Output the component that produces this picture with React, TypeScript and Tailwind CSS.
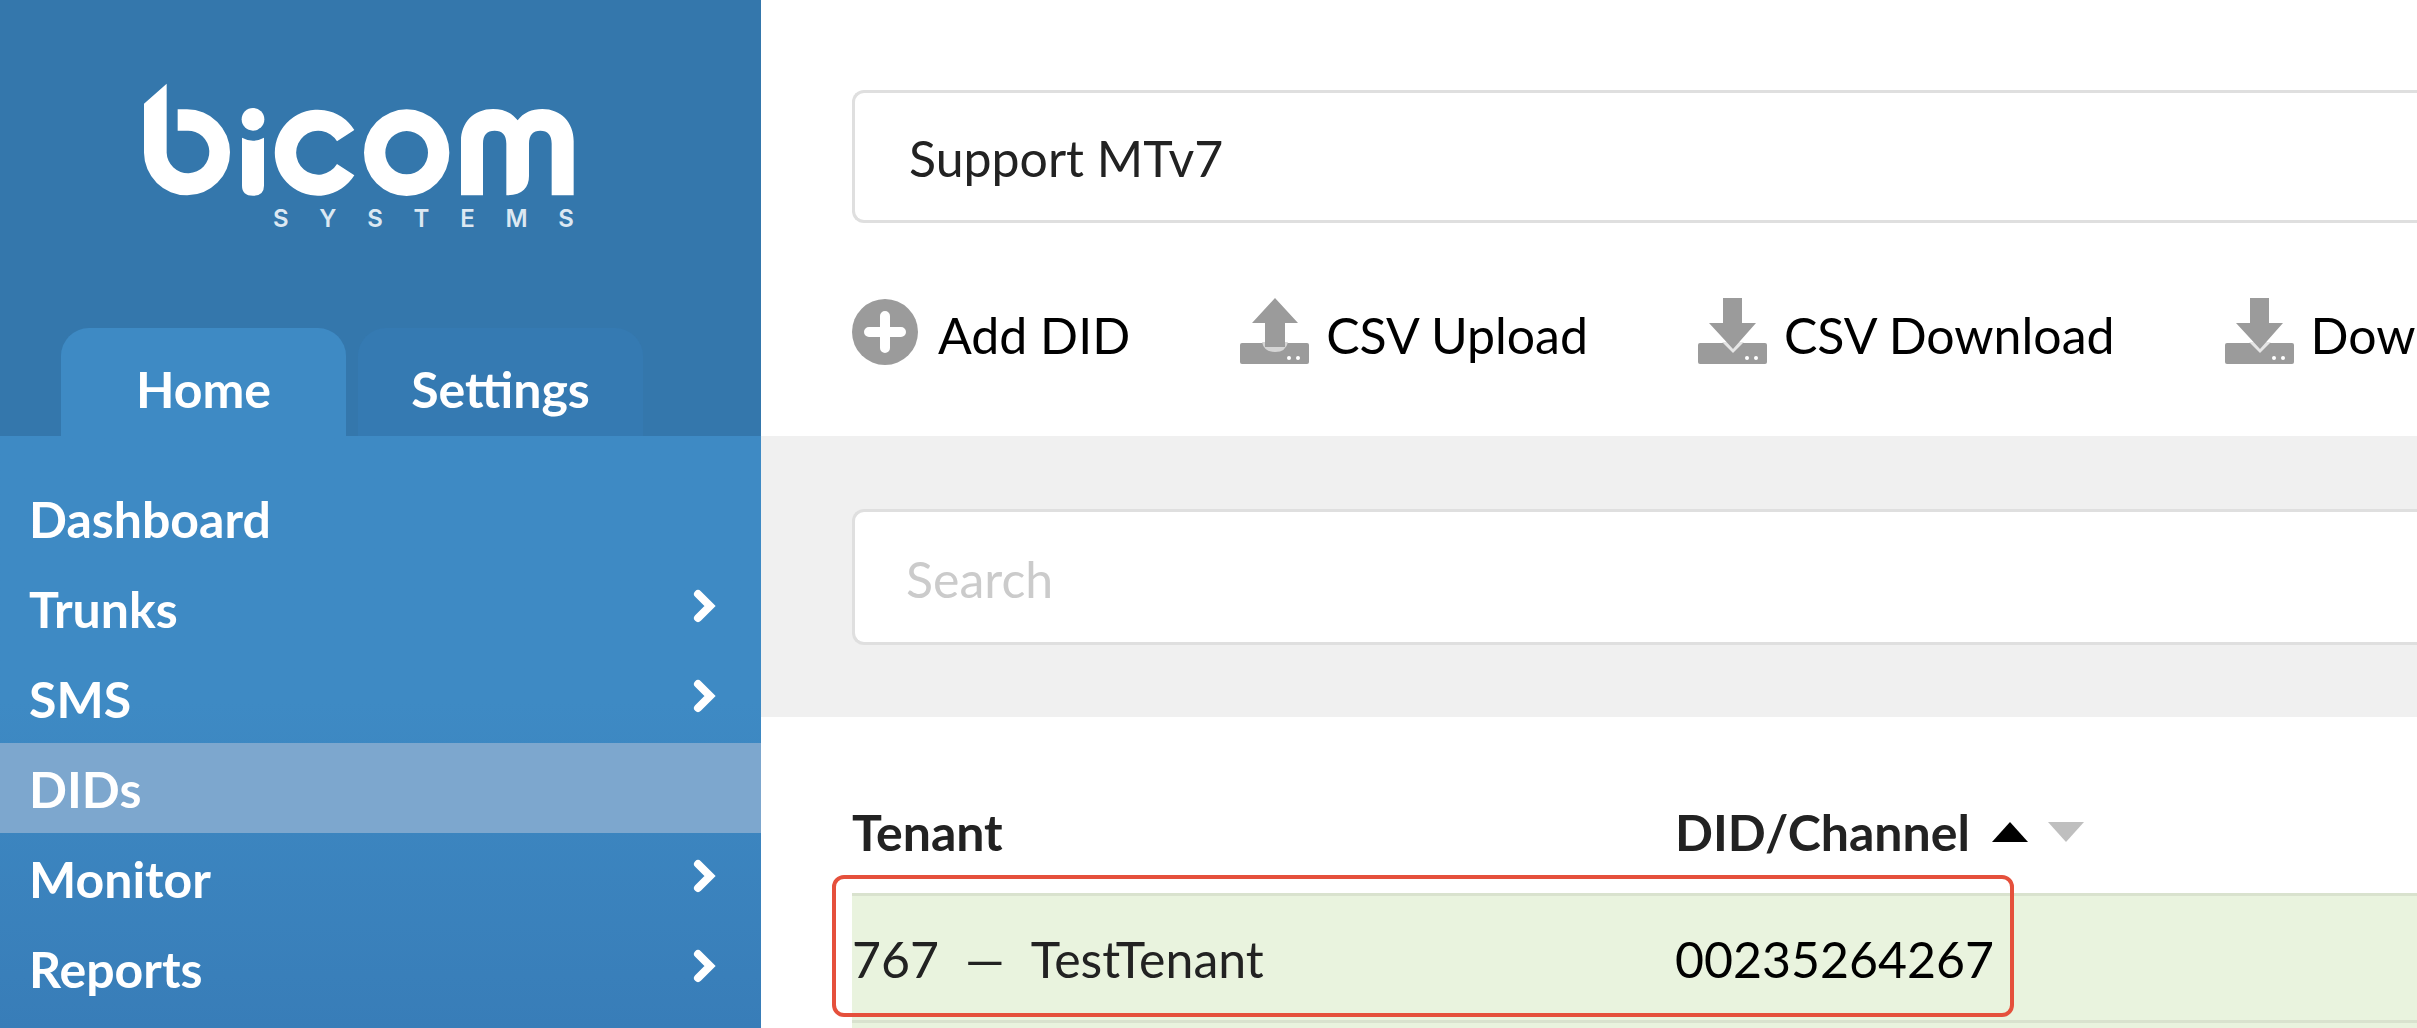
const menuItems = [
    { label: "Dashboard", hasChildren: false, active: false },
    { label: "Trunks", hasChildren: true, active: false },
    { label: "SMS", hasChildren: true, active: false },
    { label: "DIDs", hasChildren: false, active: true },
    { label: "Monitor", hasChildren: true, active: false },
    { label: "Reports", hasChildren: true, active: false },
];

const Logo = () => (
    <div className="w-[430px]">
        <svg viewBox="71 66 1290 339" className="block w-full" fill="#fff" role="img" aria-label="bicom">
            <path d="M172 145H200A129 129 0 1 1 71 275V128L139 68V275A64 64 0 1 0 200 209H172Z" />
            <circle cx="398" cy="175" r="34" />
            <path d="M365 230Q398 248 431 230V374Q431 404 398 404Q365 404 365 374Z" />
            <path d="M702 207A129 129 0 1 0 702 343L650 309A66 66 0 1 1 650 241Z" />
            <path
                fillRule="evenodd"
                d="M859 145A128 130 0 1 0 859 405A128 130 0 1 0 859 145ZM859 210A64 65 0 1 1 859 340A64 65 0 1 1 859 210Z"
            />
            <path d="M1022 403V240C1022 185 1060 144 1118 144C1150 144 1175 155 1192 178C1209 155 1234 144 1266 144C1322 144 1360 185 1360 240V403H1294V248C1294 222 1282 209 1260 209C1238 209 1226 222 1226 248V345C1226 380 1205 403 1158 403V248C1158 222 1146 209 1123 209C1100 209 1088 222 1088 248V403Z" />
        </svg>
        <div className="mt-[9px] ml-auto flex w-[301px] justify-between font-[Inter,sans-serif] text-2xl leading-7 font-semibold text-[#dce8f2]">
            {"SYSTEMS".split("").map((letter, i) => (
                <span key={i}>{letter}</span>
            ))}
        </div>
    </div>
);

const Chevron = () => (
    <svg viewBox="0 0 24 34" className="mb-1 h-[34px] w-6" aria-hidden="true">
        <path d="M5 5L17 17L5 29" fill="none" stroke="#fff" strokeWidth="8" strokeLinecap="round" />
    </svg>
);

const PlusIcon = () => (
    <svg viewBox="0 0 70 68" className="h-17 w-[70px]" aria-hidden="true">
        <circle cx="33" cy="34" r="33" fill="#9b9b9b" />
        <path d="M33 18V50M17 34H49" stroke="#fff" strokeWidth="10" strokeLinecap="round" />
    </svg>
);

const Tray = () => (
    <>
        <rect x="0" y="45" width="69" height="21" rx="2" fill="#9b9b9b" />
        <circle cx="49" cy="60" r="2" fill="#fff" />
        <circle cx="58" cy="60" r="2" fill="#fff" />
    </>
);

const UploadIcon = () => (
    <svg viewBox="0 0 70 68" className="h-17 w-[70px]" aria-hidden="true">
        <Tray />
        <path d="M22 44H48Q46 54 35 54Q24 54 22 44Z" fill="#d5d5d5" />
        <path d="M35 0L58 25H45V49H25V25H12Z" fill="#9b9b9b" />
    </svg>
);

const DownloadIcon = () => (
    <svg viewBox="0 0 70 68" className="h-17 w-[70px]" aria-hidden="true">
        <Tray />
        <path d="M24 44H46L35 55Z" fill="#e6e6e6" />
        <path d="M25 0H44V25H58L35 51L11 25H25Z" fill="#9b9b9b" />
    </svg>
);

const actions = [
    { label: "Add DID", icon: <PlusIcon /> },
    { label: "CSV Upload", icon: <UploadIcon /> },
    { label: "CSV Download", icon: <DownloadIcon /> },
    { label: "Dow", icon: <DownloadIcon /> },
];

const Sidebar = () => (
    <aside className="flex w-[761px] shrink-0 flex-col font-bold text-white">
        <div className="flex flex-col bg-[#3477ac]">
            <div className="pt-[83px] pl-36">
                <Logo />
            </div>
            <div className="mt-[95px] flex gap-3 pl-[61px]" role="tablist">
                <button role="tab" aria-selected="true" className="h-[108px] w-[285px] rounded-t-[28px] bg-[#3e8ac4] pt-3.5">
                    Home
                </button>
                <button role="tab" aria-selected="false" className="h-[108px] w-[285px] rounded-t-[28px] bg-[#357ab2] pt-3.5">
                    Settings
                </button>
            </div>
        </div>
        <nav className="flex-1 bg-linear-to-b from-[#3e8ac4] from-45% to-[#387db8] pt-[37px]">
            {menuItems.map(({ label, hasChildren, active }) => (
                <a
                    key={label}
                    href="#"
                    aria-current={active ? "page" : undefined}
                    className={`flex h-[90px] items-center justify-between pr-11 pl-[29px] ${active ? "bg-[#7da7ce]" : ""}`}
                >
                    <span className="pt-0.5">{label}</span>
                    {hasChildren && <Chevron />}
                </a>
            ))}
        </nav>
    </aside>
);

const DidTable = () => (
    <table className="w-full table-fixed border-collapse text-left">
        <thead>
            <tr className="h-[127px] font-bold text-[#222]">
                <th className="w-[823px] pt-1">Tenant</th>
                <th className="pt-1">
                    <button className="flex items-center">
                        DID/Channel
                        <svg viewBox="0 0 92 20" className="ml-[22px] h-5 w-[92px]" aria-hidden="true">
                            <path d="M0 20L18 0L36 20Z" />
                            <path d="M56 0H92L74 20Z" fill="#bfbfbf" />
                        </svg>
                    </button>
                </th>
            </tr>
        </thead>
        <tbody>
            <tr className="h-[127px] border-t-3 border-[#d9e2ce] bg-[#e9f3de]">
                <td className="pt-0.5 text-[#222]">
                    <span className="flex gap-[26px]">
                        <span>767</span>
                        <span>—</span>
                        <span>TestTenant</span>
                    </span>
                </td>
                <td className="pt-0.5">00235264267</td>
            </tr>
            <tr className="h-[127px] border-t-3 border-[#d9e2ce] bg-[#e9f3de]">
                <td />
                <td />
            </tr>
        </tbody>
    </table>
);

const App = () => (
    <div className="flex h-screen overflow-hidden bg-white font-[Lato,sans-serif] text-[50px] leading-15 text-black">
        <Sidebar />
        <main className="min-w-0 flex-1">
            <div className="h-[436px] pt-[90px] pl-[91px]">
                <select
                    aria-label="Tenant"
                    className="block h-[133px] w-full appearance-none rounded-l-xl border-3 border-r-0 border-[#dfdfdf] bg-white pt-0.5 pl-[54px] text-[#222]"
                >
                    <option>Support MTv7</option>
                </select>
                <div className="mt-[75px] flex gap-[110px]">
                    {actions.map(({ label, icon }) => (
                        <button key={label} className="flex shrink-0 items-center gap-4 whitespace-nowrap">
                            {icon}
                            <span className="pt-1.5">{label}</span>
                        </button>
                    ))}
                </div>
            </div>

            <div className="bg-[#f0f0f0] pt-[73px] pb-[72px] pl-[91px]">
                <input
                    type="search"
                    aria-label="Search"
                    placeholder="Search"
                    className="block h-[136px] w-full rounded-l-xl border-3 border-r-0 border-[#dfdfdf] bg-white pt-1 pl-[51px] placeholder:text-[#cbcbcb]"
                />
            </div>

            <div className="relative pt-[50px] pl-[91px]">
                <DidTable />
                {/* Highlight around the first DID */}
                <div className="pointer-events-none absolute top-[158px] left-[71px] h-[142px] w-[1182px] rounded-xl border-4 border-[#e5503c]" />
            </div>
        </main>
    </div>
);

export default App;
